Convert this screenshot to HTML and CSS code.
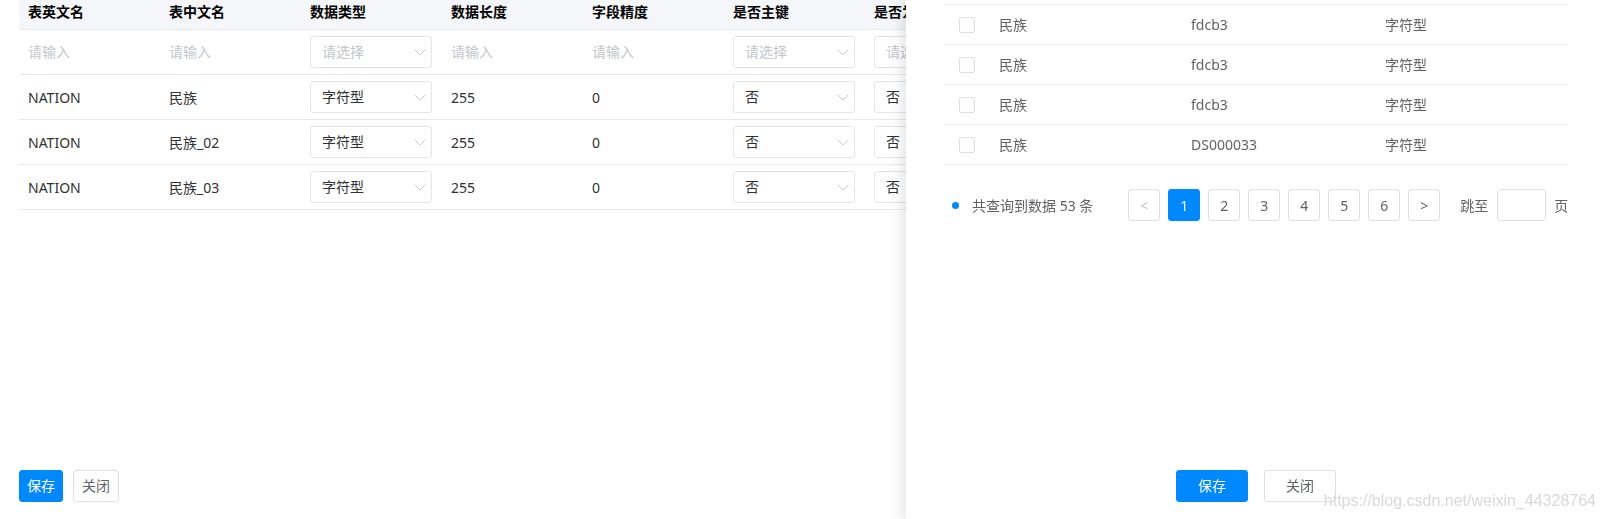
FILE: index.html
```html
<!DOCTYPE html>
<html lang="zh-CN">
<head>
<meta charset="utf-8">
<title>字段编辑</title>
<link rel="stylesheet" href="styles.css">
</head>
<body>
<div class="page">
  <div class="table">
    <div class="row head">
      <div class="cell">表英文名</div>
      <div class="cell">表中文名</div>
      <div class="cell">数据类型</div>
      <div class="cell">数据长度</div>
      <div class="cell">字段精度</div>
      <div class="cell">是否主键</div>
      <div class="cell">是否为空</div>
    </div>
    <div class="row">
      <div class="cell ph">请输入</div>
      <div class="cell ph">请输入</div>
      <div class="cell"><div class="select ph"><span>请选择</span><svg class="arrow" width="12" height="7" viewBox="0 0 12 7"><polyline points="0.5,0.5 6,6 11.5,0.5" fill="none" stroke="#c8cbd2" stroke-width="1"/></svg></div></div>
      <div class="cell ph">请输入</div>
      <div class="cell ph">请输入</div>
      <div class="cell"><div class="select ph"><span>请选择</span><svg class="arrow" width="12" height="7" viewBox="0 0 12 7"><polyline points="0.5,0.5 6,6 11.5,0.5" fill="none" stroke="#c8cbd2" stroke-width="1"/></svg></div></div>
      <div class="cell"><div class="select ph"><span>请选择</span><svg class="arrow" width="12" height="7" viewBox="0 0 12 7"><polyline points="0.5,0.5 6,6 11.5,0.5" fill="none" stroke="#c8cbd2" stroke-width="1"/></svg></div></div>
    </div>
    <div class="row">
      <div class="cell txt">NATION</div>
      <div class="cell txt">民族</div>
      <div class="cell"><div class="select"><span>字符型</span><svg class="arrow" width="12" height="7" viewBox="0 0 12 7"><polyline points="0.5,0.5 6,6 11.5,0.5" fill="none" stroke="#c8cbd2" stroke-width="1"/></svg></div></div>
      <div class="cell txt">255</div>
      <div class="cell txt">0</div>
      <div class="cell"><div class="select"><span>否</span><svg class="arrow" width="12" height="7" viewBox="0 0 12 7"><polyline points="0.5,0.5 6,6 11.5,0.5" fill="none" stroke="#c8cbd2" stroke-width="1"/></svg></div></div>
      <div class="cell"><div class="select"><span>否</span><svg class="arrow" width="12" height="7" viewBox="0 0 12 7"><polyline points="0.5,0.5 6,6 11.5,0.5" fill="none" stroke="#c8cbd2" stroke-width="1"/></svg></div></div>
    </div>
    <div class="row">
      <div class="cell txt">NATION</div>
      <div class="cell txt">民族_02</div>
      <div class="cell"><div class="select"><span>字符型</span><svg class="arrow" width="12" height="7" viewBox="0 0 12 7"><polyline points="0.5,0.5 6,6 11.5,0.5" fill="none" stroke="#c8cbd2" stroke-width="1"/></svg></div></div>
      <div class="cell txt">255</div>
      <div class="cell txt">0</div>
      <div class="cell"><div class="select"><span>否</span><svg class="arrow" width="12" height="7" viewBox="0 0 12 7"><polyline points="0.5,0.5 6,6 11.5,0.5" fill="none" stroke="#c8cbd2" stroke-width="1"/></svg></div></div>
      <div class="cell"><div class="select"><span>否</span><svg class="arrow" width="12" height="7" viewBox="0 0 12 7"><polyline points="0.5,0.5 6,6 11.5,0.5" fill="none" stroke="#c8cbd2" stroke-width="1"/></svg></div></div>
    </div>
    <div class="row">
      <div class="cell txt">NATION</div>
      <div class="cell txt">民族_03</div>
      <div class="cell"><div class="select"><span>字符型</span><svg class="arrow" width="12" height="7" viewBox="0 0 12 7"><polyline points="0.5,0.5 6,6 11.5,0.5" fill="none" stroke="#c8cbd2" stroke-width="1"/></svg></div></div>
      <div class="cell txt">255</div>
      <div class="cell txt">0</div>
      <div class="cell"><div class="select"><span>否</span><svg class="arrow" width="12" height="7" viewBox="0 0 12 7"><polyline points="0.5,0.5 6,6 11.5,0.5" fill="none" stroke="#c8cbd2" stroke-width="1"/></svg></div></div>
      <div class="cell"><div class="select"><span>否</span><svg class="arrow" width="12" height="7" viewBox="0 0 12 7"><polyline points="0.5,0.5 6,6 11.5,0.5" fill="none" stroke="#c8cbd2" stroke-width="1"/></svg></div></div>
    </div>
  </div>
  <div class="footer">
    <button class="btn primary">保存</button>
    <button class="btn plain">关闭</button>
  </div>
</div>

<aside class="drawer">
  <div class="dtable">
    <div class="drow"><div class="dcell chk"><span class="checkbox"></span></div><div class="dcell">民族</div><div class="dcell">fdcb3</div><div class="dcell">字符型</div></div>
    <div class="drow"><div class="dcell chk"><span class="checkbox"></span></div><div class="dcell">民族</div><div class="dcell">fdcb3</div><div class="dcell">字符型</div></div>
    <div class="drow"><div class="dcell chk"><span class="checkbox"></span></div><div class="dcell">民族</div><div class="dcell">fdcb3</div><div class="dcell">字符型</div></div>
    <div class="drow"><div class="dcell chk"><span class="checkbox"></span></div><div class="dcell">民族</div><div class="dcell">DS000033</div><div class="dcell">字符型</div></div>
  </div>
  <div class="pager">
    <span class="dot"></span>
    <span class="total">共查询到数据 53 条</span>
    <div class="pages">
      <span class="pg disabled">&lt;</span>
      <span class="pg active">1</span>
      <span class="pg">2</span>
      <span class="pg">3</span>
      <span class="pg">4</span>
      <span class="pg">5</span>
      <span class="pg">6</span>
      <span class="pg">&gt;</span>
    </div>
    <span class="jump">跳至</span>
    <span class="jump-input"></span>
    <span class="jump-end">页</span>
  </div>
  <div class="dfooter">
    <button class="btn primary wide">保存</button>
    <button class="btn wide">关闭</button>
  </div>
</aside>

<div class="watermark">https://blog.csdn.net/weixin_44328764</div>
</body>
</html>
```

FILE: styles.css
```css
* { box-sizing: border-box; }
html, body { margin: 0; padding: 0; background: #fff; }
body {
  font-family: "Noto Sans", "Noto Sans CJK SC", sans-serif;
  font-size: 14px;
  color: #303133;
  overflow: hidden;
}
.page {
  height: 100vh;
  display: flex;
  flex-direction: column;
  padding: 0 0 17px 19px;
}
.table { width: 987px; }
.row {
  display: grid;
  grid-template-columns: repeat(7, 141px);
  height: 45px;
  border-bottom: 1px solid #e6e8ee;
  align-items: center;
}
.cell {
  padding: 0 9px;
  line-height: 20px;
  white-space: nowrap;
  overflow: hidden;
}
.cell.txt { padding-top: 1px; }
.row.head {
  height: 30px;
  background: #f5f6fa;
  align-items: start;
}
.row.head .cell {
  font-weight: bold;
  color: #000;
  line-height: 23px;
}
.ph { color: #c3c5cc; }
.select {
  width: 122px;
  height: 32px;
  border: 1px solid #e2e4ea;
  border-radius: 3px;
  display: flex;
  align-items: center;
  justify-content: space-between;
  padding: 0 5px 0 11px;
  color: #303133;
}
.select.ph { color: #c3c5cc; }
.arrow { display: block; }
.footer {
  margin-top: auto;
  display: flex;
  gap: 10px;
}
.btn {
  height: 32px;
  padding: 0 7px;
  font-family: inherit;
  font-size: 14px;
  line-height: 30px;
  border: 1px solid #dcdfe6;
  border-radius: 3px;
  background: #fff;
  color: #606266;
}
.btn.plain { padding: 0 8px; }
.btn.primary {
  background: #0088ff;
  border-color: #0088ff;
  color: #fff;
}
.btn.wide { width: 72px; }

.drawer {
  position: fixed;
  top: 0;
  bottom: 0;
  left: 906px;
  right: 0;
  background: #fff;
  box-shadow: -5px 0 12px rgba(0, 0, 0, 0.1);
  display: flex;
  flex-direction: column;
  padding: 4px 38px 17px;
  color: #606266;
}
.dtable { border-top: 1px solid #e6e8ee; }
.drow {
  display: grid;
  grid-template-columns: 45px 192px 194px 1fr;
  height: 40px;
  border-bottom: 1px solid #e6e8ee;
  align-items: center;
}
.dcell { padding: 0 10px; line-height: 20px; }
.dcell.chk { padding: 0 0 0 15px; display: flex; }
.checkbox {
  width: 16px;
  height: 16px;
  border: 1px solid #dcdfe6;
  border-radius: 2px;
  display: block;
}
.pager {
  margin-top: 24px;
  height: 32px;
  display: flex;
  align-items: center;
  white-space: nowrap;
}
.pager > * { flex-shrink: 0; }
.dot {
  width: 7px;
  height: 7px;
  border-radius: 50%;
  background: #0088ff;
  margin-left: 8px;
}
.total { margin-left: 13px; }
.pages { display: flex; gap: 8px; margin-left: 35px; }
.pg {
  width: 32px;
  height: 32px;
  border: 1px solid #dcdfe6;
  border-radius: 3px;
  display: flex;
  align-items: center;
  justify-content: center;
  color: #606266;
}
.pg.disabled { color: #c0c4cc; }
.pg.active { background: #0088ff; border-color: #0088ff; color: #fff; }
.jump { margin-left: 20px; }
.jump-input {
  width: 49px;
  height: 32px;
  border: 1px solid #dcdfe6;
  border-radius: 3px;
  margin-left: 9px;
}
.jump-end { margin-left: 8px; }
.dfooter {
  margin-top: auto;
  display: flex;
  justify-content: center;
  gap: 16px;
}
.watermark {
  position: fixed;
  right: 10px;
  bottom: 9px;
  font-family: "Liberation Sans", Arial, sans-serif;
  font-size: 16px;
  line-height: 18px;
  color: #d8d8d8;
}
```
